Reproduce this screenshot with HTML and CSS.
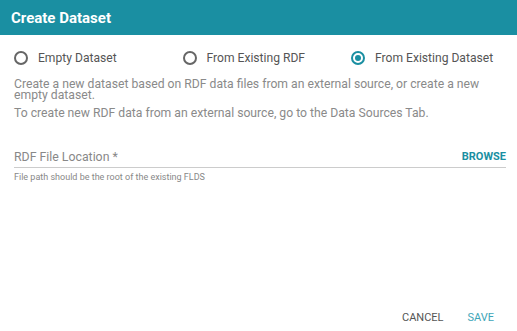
FILE: index.html
```html
<!DOCTYPE html>
<html lang="en">
<head>
    <meta charset="UTF-8">
    <title>Create Dataset</title>
    <link rel="stylesheet" href="styles.css">
</head>
<body>
    <div class="dialog">
        <div class="dialog-header">
            <h2>Create Dataset</h2>
        </div>
        <div class="dialog-body">
            <div class="radio-row">
                <label class="radio"><span class="circle"></span>Empty Dataset</label>
                <label class="radio"><span class="circle"></span>From Existing RDF</label>
                <label class="radio checked"><span class="circle"></span>From Existing Dataset</label>
            </div>
            <p class="desc">Create a new dataset based on RDF data files from an external source, or create a new empty dataset.</p>
            <p class="desc">To create new RDF data from an external source, go to the Data Sources Tab.</p>

            <div class="field">
                <div class="field-input">
                    <span class="field-label">RDF File Location *</span>
                    <a href="#" class="browse">BROWSE</a>
                </div>
                <div class="field-help">File path should be the root of the existing FLDS</div>
            </div>
        </div>
        <div class="dialog-actions">
            <button class="btn-flat">CANCEL</button>
            <button class="btn-flat primary">SAVE</button>
        </div>
    </div>
</body>
</html>
```

FILE: styles.css
```css
* {
    margin: 0;
    padding: 0;
    box-sizing: border-box;
    font-family: Roboto, 'Noto Sans', sans-serif;
}

body {
    width: 517px;
    height: 331px;
    background: #fff;
}

.dialog {
    display: flex;
    flex-direction: column;
    height: 100%;
}

.dialog-header {
    height: 35px;
    background: #1a8fa2;
    display: flex;
    align-items: center;
    padding: 0 11px;
}

.dialog-header h2 {
    color: #fff;
    font-size: 15px;
    font-weight: 700;
}

.dialog-body {
    flex: 1;
    padding: 12px 11px 0 14px;
}

.radio-row {
    display: flex;
    height: 22px;
    align-items: center;
}

.radio {
    display: flex;
    align-items: center;
    flex-shrink: 0;
    gap: 10px;
    font-size: 12.1px;
    color: #555;
    width: 168.5px;
}

.radio:last-child {
    width: auto;
}

.circle {
    width: 14px;
    height: 14px;
    border: 2px solid #666;
    border-radius: 50%;
    display: flex;
    align-items: center;
    justify-content: center;
}

.checked .circle {
    border-color: #1a8fa2;
}

.checked .circle::after {
    content: '';
    width: 6px;
    height: 6px;
    border-radius: 50%;
    background: #1a8fa2;
}

.desc {
    font-size: 12.2px;
    color: #8a8a8a;
    line-height: 11px;
    margin-top: 10px;
}

.desc + .desc {
    margin-top: 7px;
}

.field {
    margin-top: 27px;
}

.field-input {
    display: flex;
    justify-content: space-between;
    align-items: center;
    height: 22px;
    border-bottom: 1px solid #ccc;
}

.field-label {
    font-size: 12.3px;
    color: #888;
}

.browse {
    font-size: 11px;
    font-weight: 700;
    color: #1a8fa2;
    text-decoration: none;
}

.field-help {
    font-size: 9px;
    color: #888;
    margin-top: 4px;
}

.dialog-actions {
    display: flex;
    justify-content: flex-end;
    gap: 8px;
    padding: 0 15px 4px 0;
}

.btn-flat {
    background: none;
    border: none;
    font-size: 11px;
    color: #555;
    padding: 0 8px;
    height: 20px;
}

.btn-flat.primary {
    color: #3ea6b8;
}
```
